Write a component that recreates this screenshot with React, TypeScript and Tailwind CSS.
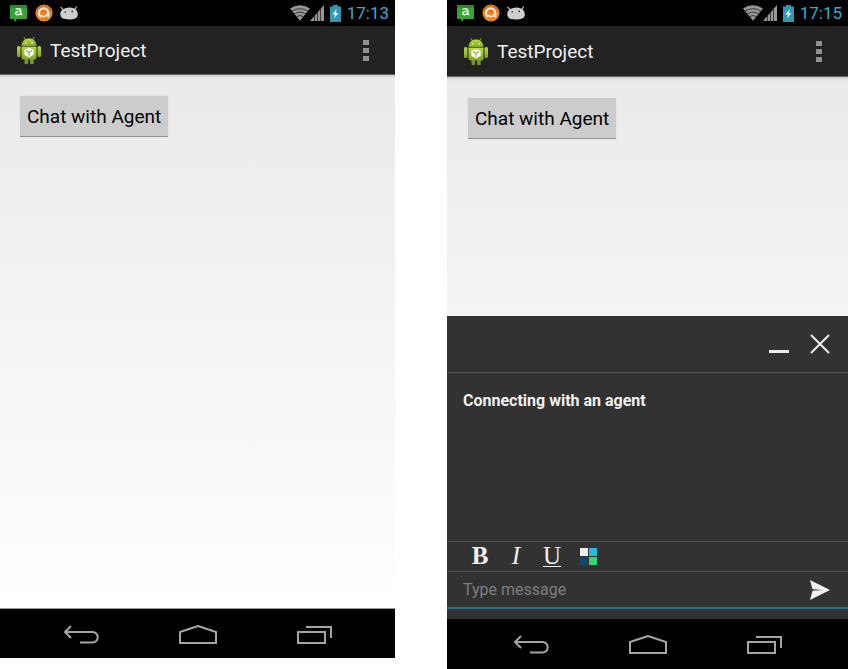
import React from "react";

const roboto = "font-['Roboto','Noto_Sans',sans-serif]";

function ChatBadge() {
  return (
    <svg width="18" height="18" viewBox="0 0 18 18" aria-hidden="true">
      <path d="M0 1h17v14H7l-2 3-1-3H0z" fill="#35a433" />
      <path d="M0 1h17v3H0z" fill="#2c8b2e" />
      <path d="M5.700 5.400c1.600-1 5.200-.9 5.200 1.300v2.800c0 1 .6 1.200 1.500 1M10.600 7.400C7.500 7.200 5.700 7.800 5.700 9.200c0 2 3.600 1.900 5 .1" fill="none" stroke="#e2f0dc" strokeWidth="1.500" />
    </svg>
  );
}

function AvastBadge() {
  return (
    <svg width="18" height="18" viewBox="0 0 18 18" aria-hidden="true">
      <circle cx="9" cy="9" r="8.600" fill="#e58325" />
      <path d="M.6 7.500A8.600 8.600 0 0 1 17.400 7.500z" fill="#d97420" />
      <path d="M5.600 12.600A4.700 4.700 0 1 1 13.300 8.500v4" fill="none" stroke="#fbe8d3" strokeWidth="2.200" strokeLinecap="round" />
      <path d="M7 11.600a2.600 2.600 0 0 0 4.600-1" fill="none" stroke="#fbe8d3" strokeWidth="1.600" strokeLinecap="round" />
    </svg>
  );
}

function DroidHead() {
  return (
    <svg width="18" height="14" viewBox="0 0 18 14" aria-hidden="true">
      <path d="M1 .6 3.200 3C7 1 11 1 14.600 2.800L16.300.2l.8.5-1.500 2.900c1.800 1.500 2.600 3.900 2 6.100-.8 2.600-3 3.700-8.600 3.700S1.300 12.300.5 9.800C-.2 7.500.6 5.300 2.300 3.800L.2 1.200z" fill="#cecece" />
      <circle cx="5.200" cy="6" r=".8" fill="#202020" />
      <circle cx="12.200" cy="5.400" r=".8" fill="#202020" />
    </svg>
  );
}

function Wifi() {
  return (
    <svg width="20" height="16" viewBox="0 0 20 16" aria-hidden="true">
      <path d="M0 3.500Q10-2.800 20 3.500L10 15.800z" fill="#969696" />
      <path d="M2 6.200q8-5 16 0M4.200 9q5.800-3.700 11.600 0M6.600 11.600q3.400-2.200 6.800 0" fill="none" stroke="#222" strokeWidth=".8" />
    </svg>
  );
}

function Signal() {
  return (
    <svg width="14" height="16" viewBox="0 0 14 16" aria-hidden="true">
      <path d="M14 0v16H0z" fill="#969696" />
      <path d="M4.500 10v6M7.500 7v9M10.500 3v13" stroke="#222" strokeWidth=".8" />
    </svg>
  );
}

function Battery() {
  return (
    <svg width="11" height="17" viewBox="0 0 11 17" aria-hidden="true">
      <path d="M3 0h5v1.500h3V17H0V1.500h3z" fill="#3296b5" />
      <path d="M6.500 4 2.500 9.500H5L4 13.500 8.500 8H6z" fill="#e6f7fc" />
    </svg>
  );
}

function AppIcon() {
  return (
    <svg width="26" height="30" viewBox="0 0 26 30" aria-hidden="true">
      <defs>
        <linearGradient id="droid" x1="0" y1="0" x2="0" y2="1">
          <stop offset="0" stopColor="#b9dc45" />
          <stop offset="1" stopColor="#7fa51c" />
        </linearGradient>
      </defs>
      <path d="m8 1 1.700 3.500M18 1l-1.700 3.500" stroke="#8aa638" strokeWidth="1" />
      <path d="M8.500 21h3.700v6.500q-1.800 1.600-3.700 0zM14 21h3.700v6.500q-1.900 1.600-3.700 0z" fill="#75942d" />
      <rect x="1" y="10" width="3.500" height="11" rx="1.600" fill="url(#droid)" />
      <rect x="21.500" y="10" width="3.500" height="11" rx="1.600" fill="url(#droid)" />
      <path d="M5.500 10.200C5.500 5 9 2.500 13 2.500s7.500 2.500 7.500 7.700z" fill="url(#droid)" />
      <path d="M5.500 10.700h15v10.800q0 2-2 2h-11q-2 0-2-2z" fill="url(#droid)" />
      <circle cx="9.800" cy="7" r=".8" fill="#f4ffd8" />
      <circle cx="16.200" cy="7" r=".8" fill="#f4ffd8" />
      <path d="m13 11.700 4.600 2.300v4.700L13 21.400l-4.600-2.700V14z" fill="#fff" />
      <path d="m9.800 14.600 3.200 1.700 3.200-1.700M13 16.300v3.500" fill="none" stroke="#789a31" strokeWidth="1" />
    </svg>
  );
}

function StatusBar({ time }: { time: string }) {
  return (
    <div className="flex h-[26px] items-center justify-between bg-black pl-[10px] pr-[6px]">
      <div className="flex items-center gap-[7px]">
        <ChatBadge />
        <AvastBadge />
        <DroidHead />
      </div>
      <div className="flex items-center">
        <Wifi />
        <Signal />
        <span className="ml-[6px]"><Battery /></span>
        <time className="ml-[6px] text-[17px] leading-[26px] text-[#35acd5]">{time}</time>
      </div>
    </div>
  );
}

function ActionBar({ height }: { height: string }) {
  return (
    <header className={`flex ${height} items-center justify-between border-b border-[#686868] bg-[#222] pl-4 pr-[18px]`}>
      <div className="flex items-center gap-2 pt-0.5">
        <AppIcon />
        <h1 className="text-[19px] leading-6 text-[#f1f1f1]">TestProject</h1>
      </div>
      <button type="button" aria-label="More options" className="flex w-[22px] flex-col items-center gap-[3px]">
        <span className="h-[5px] w-[6px] bg-[#929292]" />
        <span className="h-[5px] w-[6px] bg-[#929292]" />
        <span className="h-[5px] w-[6px] bg-[#929292]" />
      </button>
    </header>
  );
}

function ChatButton() {
  return (
    <button type="button" className="h-[41px] border-b border-[#929292] bg-[#ccc] px-[7px] pt-px text-[19px] leading-6 text-black shadow-[0_0_2px_#ddd]">
      Chat with Agent
    </button>
  );
}

function NavBar({ border = "" }: { border?: string }) {
  return (
    <nav className={`flex h-[50px] items-center justify-center gap-20 bg-black pt-0.5 ${border}`}>
      <button type="button" aria-label="Back">
        <svg width="36" height="20" viewBox="0 0 36 20" fill="none" stroke="#a5a5a5" strokeWidth="2">
          <path d="M8 1 2 7l6 6M2 7h27.500a5.200 5.200 0 0 1 0 10.500H17" />
        </svg>
      </button>
      <button type="button" aria-label="Home">
        <svg width="38" height="20" viewBox="0 0 38 20" fill="none" stroke="#a5a5a5" strokeWidth="2">
          <path d="M1 18V7l18-6 18 6v11z" />
        </svg>
      </button>
      <button type="button" aria-label="Recent apps">
        <svg width="36" height="20" viewBox="0 0 36 20" fill="none" stroke="#a5a5a5" strokeWidth="2">
          <path d="M1 7h27v11H1zM9 2h25v11" />
        </svg>
      </button>
    </nav>
  );
}

function ChatPanel() {
  return (
    <section aria-label="Chat" className="flex flex-col bg-[#323232] text-[#f1f1f1]">
      <div className="flex h-[57px] items-center justify-end gap-[21px] border-b border-[#565656] pr-[18px]">
        <button type="button" aria-label="Minimize" className="flex h-5 w-5 items-end pb-px">
          <span className="h-[3px] w-full bg-[#eee]" />
        </button>
        <button type="button" aria-label="Close">
          <svg width="20" height="20" viewBox="0 0 20 20" stroke="#eee" strokeWidth="2"><path d="m1 1 18 18M19 1 1 19" /></svg>
        </button>
      </div>
      <p className="h-[168px] px-4 pt-4 text-[16px] font-bold leading-6">Connecting with an agent</p>
      <div className="flex h-[31px] items-center gap-3 border-y border-[#505050] pl-[21px] font-['Liberation_Serif',serif] text-[25px] leading-6">
        <button type="button" aria-label="Bold" className="w-6 pb-0.5 font-bold">B</button>
        <button type="button" aria-label="Italic" className="w-6 pb-0.5 italic">I</button>
        <button type="button" aria-label="Underline" className="w-6 pb-0.5 underline decoration-1 underline-offset-2">U</button>
        <button type="button" aria-label="Text color" className="grid w-6 grid-cols-[8px_8px] justify-center gap-px">
          <span className="h-2 bg-[#eee]" />
          <span className="h-2 bg-[#20bddf]" />
          <span className="h-2 bg-[#14456b]" />
          <span className="h-2 bg-[#31d671]" />
        </button>
      </div>
      <form className="mb-[10px] flex h-[37px] items-center border-b-2 border-[#2a6e85] pl-4 pr-[18px]" onSubmit={(e) => e.preventDefault()}>
        <input aria-label="Message" placeholder="Type message" className="min-w-0 flex-1 bg-transparent text-[16px] leading-6 outline-none placeholder:text-[#7e7e7e]" />
        <button type="submit" aria-label="Send">
          <svg width="20" height="20" viewBox="0 0 20 20" fill="#f1f1f1"><path d="m0 0 20 10L0 20l2.500-9.300L13 10 2.500 9.300z" /></svg>
        </button>
      </form>
    </section>
  );
}

export default function App() {
  return (
    <main className={`flex items-start gap-[52px] bg-white ${roboto}`}>
      <section aria-label="App before chat" className="flex-[395] min-w-0">
        <StatusBar time="17:13" />
        <ActionBar height="h-[49px]" />
        <div className="h-[533px] bg-linear-to-b from-[#eaeaea] to-white px-5 pt-[21px] shadow-[inset_0_4px_3px_-3px_#bbb]"><ChatButton /></div>
        <NavBar border="border-t border-[#999]" />
      </section>
      <section aria-label="App during chat" className="flex-[401] min-w-0">
        <StatusBar time="17:15" />
        <ActionBar height="h-[51px]" />
        <div className="h-[239px] bg-linear-to-b from-[#eaeaea] to-[#f4f4f4] px-[21px] pt-[21px] shadow-[inset_0_4px_3px_-3px_#bbb]"><ChatButton /></div>
        <ChatPanel />
        <NavBar />
      </section>
    </main>
  );
}
